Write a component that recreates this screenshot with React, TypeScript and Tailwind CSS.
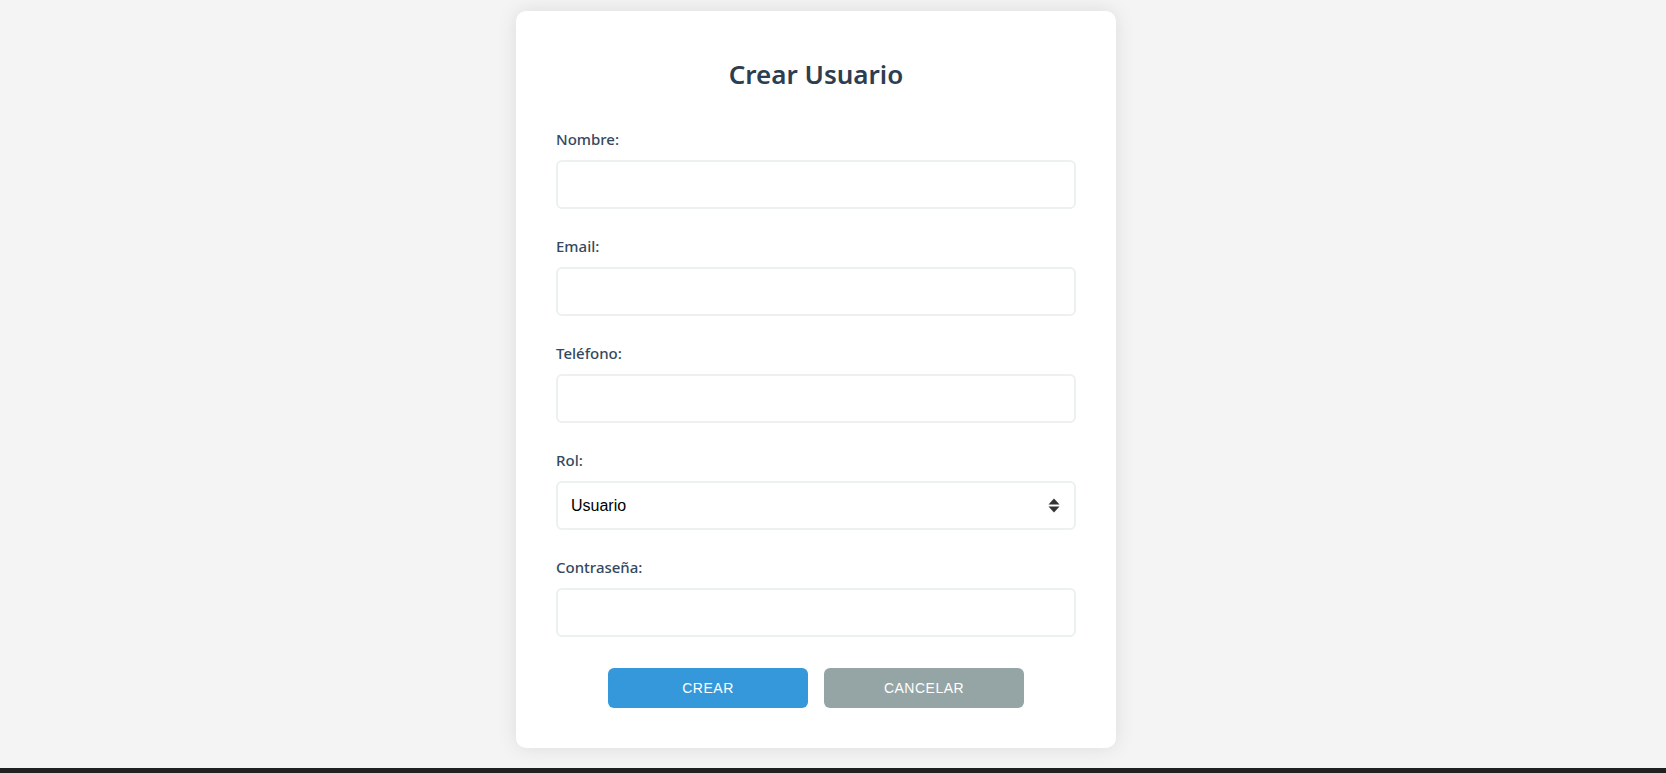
import React from "react";

const labelCls =
  "block h-[20px] leading-[20px] text-[15px] font-medium text-[#34495e] mb-[11px]";
const inputCls =
  "block w-full h-[49px] rounded-[6px] border-2 border-[#ecf0f1] bg-white px-[12px] text-[16px] outline-none";

function Field({ label, type = "text", last = false }: { label: string; type?: string; last?: boolean }) {
  return (
    <div className={last ? "" : "mb-[27px]"}>
      <label className={labelCls}>{label}</label>
      <input type={type} className={inputCls} />
    </div>
  );
}

export default function App() {
  return (
    <div className="w-full h-[773px] flex flex-col bg-[#f4f4f4] overflow-hidden" style={{ fontFamily: '"Noto Sans", "Open Sans", sans-serif' }}>
      <div className="flex-1 flex justify-center pr-[34px] pt-[11px]">
        <div className="w-[600px] h-[737px] bg-white rounded-[10px] shadow-[0_0_20px_rgba(0,0,0,0.1)] px-[40px] pt-[45px] pb-[40px]">
          <h1 className="h-[36px] leading-[36px] text-center text-[26px] font-semibold text-[#2c3e50] mb-[37px]">
            Crear Usuario
          </h1>
          <Field label="Nombre:" />
          <Field label="Email:" type="email" />
          <Field label="Teléfono:" type="tel" />
          <div className="mb-[27px]">
            <label className={labelCls}>Rol:</label>
            <div className="relative">
              <select
                className="block w-full h-[49px] rounded-[6px] border-2 border-[#ecf0f1] bg-white pl-[13px] pr-[40px] text-[16px] text-black outline-none appearance-none"
                style={{ fontFamily: '"Liberation Sans", Arial, sans-serif' }}
                defaultValue="usuario"
              >
                <option value="usuario">Usuario</option>
                <option value="admin">Administrador</option>
              </select>
              <svg
                className="absolute right-[16px] top-[17px] pointer-events-none"
                width="12"
                height="15"
                viewBox="0 0 12 15"
              >
                <path d="M6 0.5 L11.5 6.5 L0.5 6.5 Z" fill="#333" />
                <path d="M0.5 8.5 L11.5 8.5 L6 14.5 Z" fill="#333" />
              </svg>
            </div>
          </div>
          <Field label="Contraseña:" type="password" last />
          <div
            className="flex justify-center gap-[16px] mt-[31px]"
            style={{ fontFamily: '"Liberation Sans", Arial, sans-serif' }}
          >
            <button className="w-[200px] h-[40px] rounded-[6px] bg-[#3498db] text-white text-[14px] tracking-[0.5px] uppercase">
              Crear
            </button>
            <button className="w-[200px] h-[40px] rounded-[6px] bg-[#95a5a6] text-white text-[14px] tracking-[0.5px] uppercase">
              Cancelar
            </button>
          </div>
        </div>
      </div>
      <div className="h-[5px] bg-[#202020]" />
    </div>
  );
}
